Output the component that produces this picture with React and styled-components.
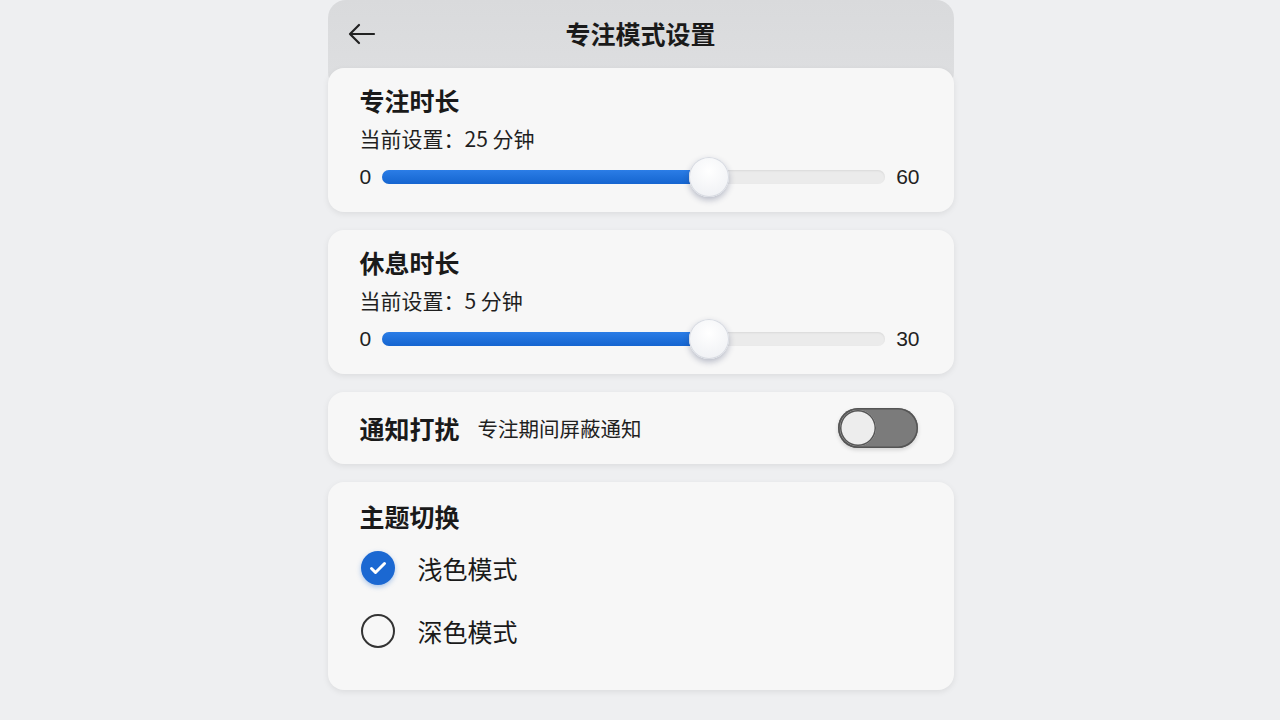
import React, { useState } from "react";
import styled, { createGlobalStyle } from "styled-components";

const GlobalStyle = createGlobalStyle`
  html, body {
    margin: 0;
    padding: 0;
    background: #eeeff1;
    font-family: "Noto Sans CJK SC", "Noto Sans", sans-serif;
    color: #1a1a1a;
  }
`;

const Page = styled.div`
  width: 1280px;
  height: 720px;
  overflow: hidden;
  display: flex;
  justify-content: center;
`;

const Panel = styled.div`
  width: 626px;
  display: flex;
  flex-direction: column;
  margin-left: 1px;
`;

const Header = styled.div`
  height: 90px;
  background: linear-gradient(#d9dadc, #dedfe1);
  border-radius: 18px;
  position: relative;
  display: flex;
  justify-content: center;
  padding-top: 14px;
  box-sizing: border-box;
`;

const BackButton = styled.button`
  position: absolute;
  left: 18px;
  top: 18px;
  background: none;
  border: none;
  padding: 0;
  width: 32px;
  height: 32px;
  display: flex;
  align-items: center;
  justify-content: center;
`;

const Title = styled.h1`
  margin: 0;
  font-size: 25px;
  font-weight: 600;
  line-height: 38px;
  color: #1a1a1a;
`;

const Cards = styled.div`
  display: flex;
  flex-direction: column;
  gap: 18px;
  margin-top: -22px;
  position: relative;
`;

const Card = styled.div`
  background: #f7f7f7;
  border-radius: 16px;
  box-shadow: 0 2px 6px rgba(0, 0, 0, 0.08);
  padding: ${(p) => p.$pad || "16px 32px"};
  height: ${(p) => p.$h}px;
  box-sizing: border-box;
  display: flex;
  flex-direction: column;
`;

const CardTitle = styled.div`
  font-size: 25px;
  font-weight: 600;
  line-height: 34px;
`;

const Sub = styled.div`
  font-size: 21px;
  line-height: 30px;
  margin-top: 6px;
  color: #1f1f1f;
`;

const SliderRow = styled.div`
  display: flex;
  align-items: center;
  margin-top: 3px;
  height: 42px;
`;

const Num = styled.span`
  font-family: "Liberation Sans", Arial, sans-serif;
  font-size: 21px;
  color: #222;
  width: ${(p) => p.$w}px;
  text-align: ${(p) => p.$align || "left"};
`;

const Track = styled.div`
  position: relative;
  width: 503px;
  height: 14px;
  border-radius: 7px;
  background: #ebebeb;
  box-shadow: inset 0 1px 2px rgba(0, 0, 0, 0.08);
`;

const Fill = styled.div`
  position: absolute;
  left: 0;
  top: 0;
  bottom: 0;
  border-radius: 7px;
  background: linear-gradient(#2b7de6, #1565d0);
`;

const Thumb = styled.div`
  position: absolute;
  top: 50%;
  width: 40px;
  height: 40px;
  margin-left: -20px;
  margin-top: -20px;
  border-radius: 50%;
  background: radial-gradient(circle at 50% 35%, #ffffff, #eceef2);
  box-shadow: 0 3px 6px rgba(40, 50, 90, 0.3), inset 0 0 0 1px #d8dbe2;
`;

const Row = styled.div`
  display: flex;
  align-items: center;
  height: 100%;
`;

const Hint = styled.span`
  font-size: 20.5px;
  margin-left: 18px;
  color: #1f1f1f;
`;

const Toggle = styled.div`
  margin-left: auto;
  margin-right: 2px;
  width: 80px;
  height: 40px;
  border-radius: 20px;
  background: #7b7b7b;
  box-shadow: inset 0 0 0 1.5px #555, 0 2px 4px rgba(0, 0, 0, 0.15);
  position: relative;
`;

const Knob = styled.div`
  position: absolute;
  left: 2px;
  top: 2px;
  width: 36px;
  height: 36px;
  border-radius: 50%;
  background: #ededed;
  box-shadow: inset 0 0 0 1.5px #555;
`;

const Option = styled.label`
  display: flex;
  align-items: center;
  height: 40px;
  margin-top: ${(p) => p.$mt}px;
  font-size: 25px;
  cursor: pointer;
`;

const Radio = styled.span`
  width: 34px;
  height: 34px;
  border-radius: 50%;
  box-sizing: border-box;
  margin-left: 1px;
  margin-right: 23px;
  display: flex;
  align-items: center;
  justify-content: center;
  background: ${(p) => (p.$on ? "#1b68d2" : "transparent")};
  border: ${(p) => (p.$on ? "none" : "2px solid #333")};
  box-shadow: ${(p) => (p.$on ? "0 2px 5px rgba(27,104,210,0.35)" : "none")};
`;

const Slider = ({ max, value }) => {
  const pct = (value / max) * 100;
  return (
    <SliderRow>
      <Num $w={22}>0</Num>
      <Track>
        <Fill style={{ width: `${pct}%` }} />
        <Thumb style={{ left: `${pct}%` }} />
      </Track>
      <Num $w={35} $align="right">{max}</Num>
    </SliderRow>
  );
};

export default function App() {
  const [theme, setTheme] = useState("light");
  return (
    <Page>
      <GlobalStyle />
      <Panel>
        <Header>
          <BackButton>
            <svg width="30" height="24" viewBox="0 0 30 24" fill="none" stroke="#222" strokeWidth="2.2" strokeLinecap="round" strokeLinejoin="round">
              <path d="M27 12H4M12 3L3 12l9 9" />
            </svg>
          </BackButton>
          <Title>专注模式设置</Title>
        </Header>
        <Cards>
          <Card $h={144} $pad="15px 32px 0 32px">
            <CardTitle>专注时长</CardTitle>
            <Sub>当前设置：25 分钟</Sub>
            <Slider max={60} value={39.1} />
          </Card>
          <Card $h={144} $pad="15px 32px 0 32px">
            <CardTitle>休息时长</CardTitle>
            <Sub>当前设置：5 分钟</Sub>
            <Slider max={30} value={19.55} />
          </Card>
          <Card $h={72} $pad="0 34px 0 32px">
            <Row>
              <CardTitle>通知打扰</CardTitle>
              <Hint>专注期间屏蔽通知</Hint>
              <Toggle>
                <Knob />
              </Toggle>
            </Row>
          </Card>
          <Card $h={208} $pad="17px 32px 0 32px">
            <CardTitle>主题切换</CardTitle>
            <Option $mt={15} onClick={() => setTheme("light")}>
              <Radio $on={theme === "light"}>
                {theme === "light" && (
                  <svg width="18" height="14" viewBox="0 0 18 14" fill="none" stroke="#fff" strokeWidth="3" strokeLinecap="round" strokeLinejoin="round">
                    <path d="M2.5 7.5l4 4 9-9" />
                  </svg>
                )}
              </Radio>
              浅色模式
            </Option>
            <Option $mt={23} onClick={() => setTheme("dark")}>
              <Radio $on={theme === "dark"} />
              深色模式
            </Option>
          </Card>
        </Cards>
      </Panel>
    </Page>
  );
}
